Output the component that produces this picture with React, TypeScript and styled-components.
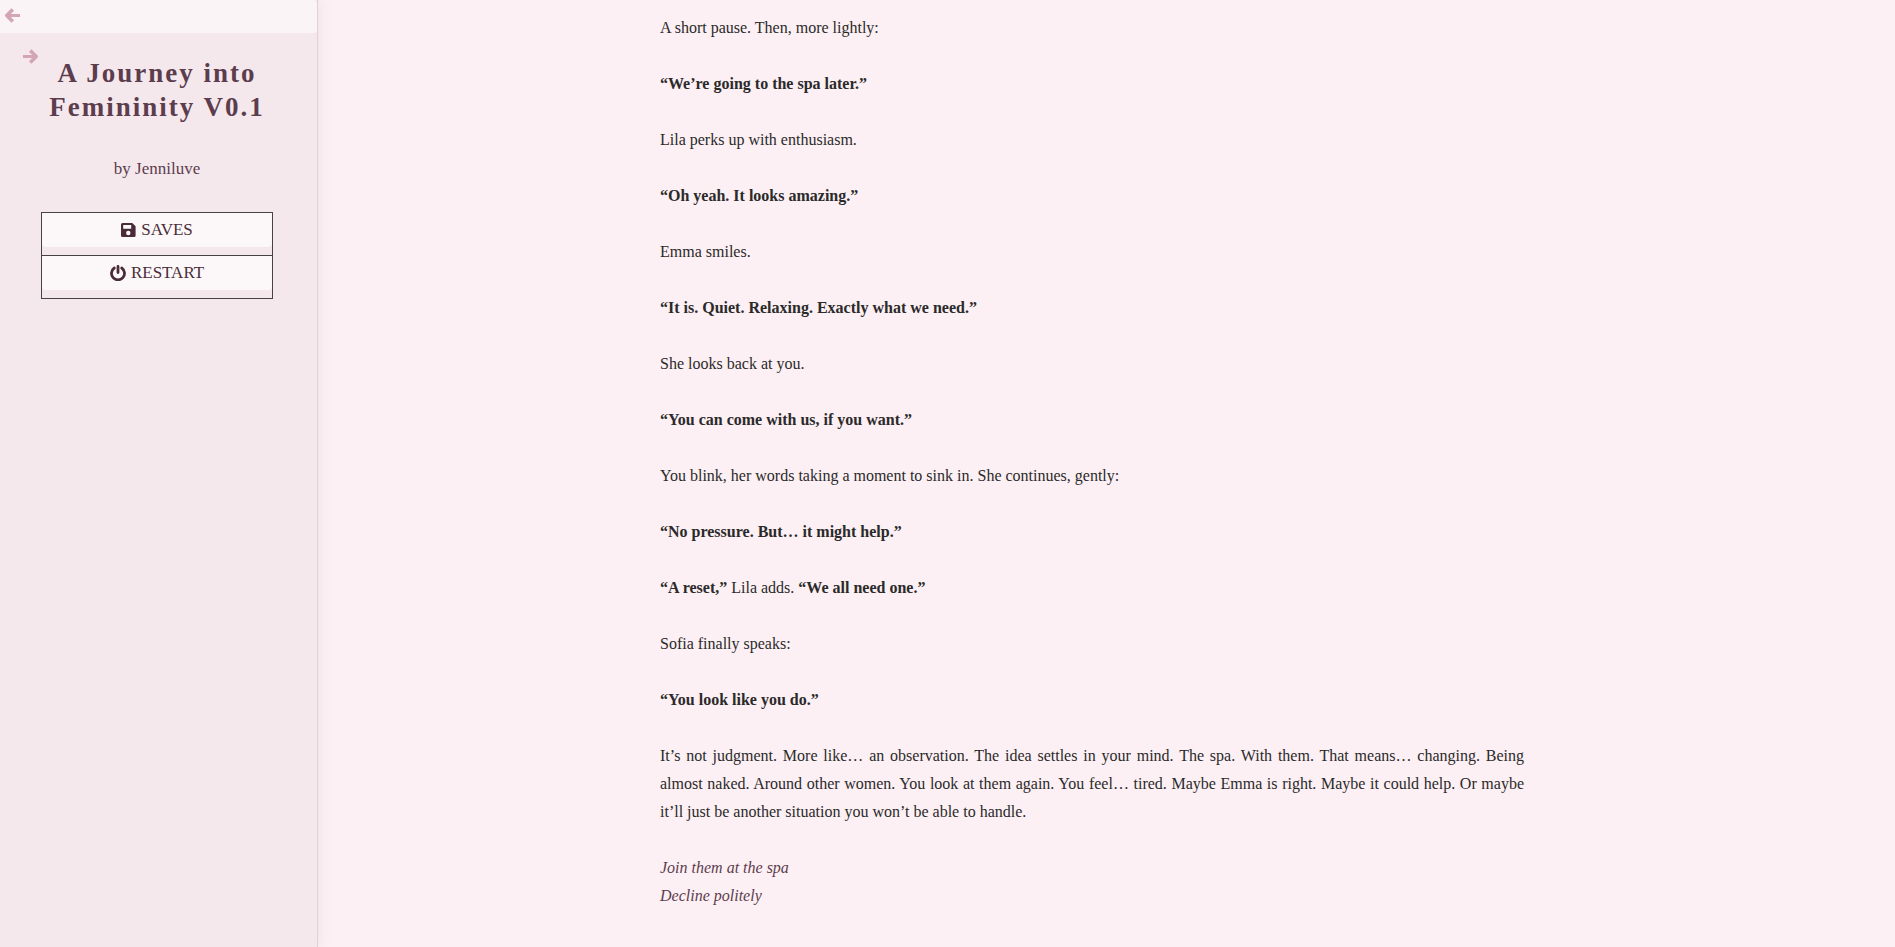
import React from "react";
import styled, { createGlobalStyle } from "styled-components";

const GlobalStyle = createGlobalStyle`
  * { box-sizing: border-box; }
  body {
    margin: 0;
    background: #fdf0f4;
    color: #2a2a2a;
    font: 16px/28px "Liberation Serif", "Times New Roman", serif;
  }
`;

const Page = styled.div`
  display: flex;
  min-height: 100vh;
`;

const Sidebar = styled.aside`
  flex: none;
  width: 318px;
  background: #f5e8ec;
  border-right: 1px solid #e3d0d7;
  box-shadow: 2px 0 12px rgba(92, 61, 78, 0.08);
  color: #5c3d4e;
  text-align: center;
`;

const IconButton = styled.button`
  display: flex;
  align-items: center;
  padding: 0 5px;
  border: 0;
  background: none;
  color: #d4a5b5;
  cursor: pointer;
`;

const ToggleBar = styled(IconButton)`
  width: 100%;
  height: 33px;
  padding-bottom: 2px;
  border-radius: 0 4px 4px 0;
  background: #faf4f6;
`;

const History = styled.nav`
  display: flex;
  padding: 16px 0 0 18px;
`;

const Title = styled.h1`
  margin: -8px 44px 31px 41px;
  font-size: 27px;
  line-height: 34px;
  letter-spacing: 2px;
`;

const Author = styled.p`
  margin: 0 44px 29px 41px;
  font-size: 17px;
`;

const Menu = styled.ul`
  margin: 0 44px 0 41px;
  padding: 0;
  border: 1px solid #444;
  list-style: none;
`;

const MenuItem = styled.li`
  padding-bottom: 8px;

  & + & {
    border-top: 1px solid #444;
  }
`;

const MenuButton = styled.button`
  display: flex;
  align-items: center;
  justify-content: center;
  gap: 5px;
  width: 100%;
  height: 34px;
  padding: 0;
  border: 0;
  border-radius: 0 0 4px 4px;
  background: #fcf8f9;
  color: #4a2c38;
  font: 17px/34px "Liberation Serif", "Times New Roman", serif;
  text-transform: uppercase;
  cursor: pointer;
`;

const Story = styled.main`
  flex: 1;
  min-width: 0;
  padding: 14px 29px 36px 0;
`;

const Passage = styled.article`
  max-width: 864px;
  margin: 0 auto;
  text-align: justify;
`;

const Paragraph = styled.p`
  margin: 0 0 28px;
`;

const Choices = styled.nav`
  display: flex;
  flex-direction: column;
  align-items: flex-start;
`;

const Choice = styled.a`
  color: #5c3d4e;
  font-style: italic;
  text-decoration: none;
`;

const Arrow = ({ forward = false }: { forward?: boolean }) => (
  <svg width="15" height="15" viewBox="0 0 15 15" fill="none" stroke="currentColor" aria-hidden="true">
    <path strokeWidth="3" d={forward ? "M0 7.5H13" : "M15 7.5H2"} />
    <path
      strokeWidth="3.6"
      strokeLinejoin="round"
      d={forward ? "M7.2 1.5L13.2 7.5L7.2 13.5" : "M7.8 1.5L1.8 7.5L7.8 13.5"}
    />
  </svg>
);

const SaveIcon = () => (
  <svg width="15" height="14" viewBox="0 0 15 14" fill="currentColor" fillRule="evenodd" aria-hidden="true">
    <path d="M1.5 0H11.3L14.6 3.2V12.5Q14.6 14 13.1 14H1.5Q0 14 0 12.5V1.5Q0 0 1.5 0ZM2.2 2V5.8H10.2V2ZM7.3 7.8A2.2 2.2 0 1 0 7.3 12.2A2.2 2.2 0 1 0 7.3 7.8Z" />
  </svg>
);

const PowerIcon = () => (
  <svg width="16" height="16" viewBox="0 0 16 16" fill="none" stroke="currentColor" strokeWidth="2.8" strokeLinecap="round" aria-hidden="true">
    <path d="M4.3 3A6.5 6.5 0 1 0 11.7 3M8 1.4V7.6" />
  </svg>
);

export default function App() {
  return (
    <>
      <GlobalStyle />
      <Page>
        <Sidebar>
          <ToggleBar type="button" aria-label="Toggle the sidebar"><Arrow /></ToggleBar>
          <History>
            <IconButton type="button" aria-label="Go forward"><Arrow forward /></IconButton>
          </History>
          <Title>A Journey into Femininity V0.1</Title>
          <Author>by Jenniluve</Author>
          <Menu>
            <MenuItem><MenuButton type="button"><SaveIcon />Saves</MenuButton></MenuItem>
            <MenuItem><MenuButton type="button"><PowerIcon />Restart</MenuButton></MenuItem>
          </Menu>
        </Sidebar>
        <Story>
          <Passage>
            <Paragraph>A short pause. Then, more lightly:</Paragraph>
            <Paragraph><b>“We’re going to the spa later.”</b></Paragraph>
            <Paragraph>Lila perks up with enthusiasm.</Paragraph>
            <Paragraph><b>“Oh yeah. It looks amazing.”</b></Paragraph>
            <Paragraph>Emma smiles.</Paragraph>
            <Paragraph><b>“It is. Quiet. Relaxing. Exactly what we need.”</b></Paragraph>
            <Paragraph>She looks back at you.</Paragraph>
            <Paragraph><b>“You can come with us, if you want.”</b></Paragraph>
            <Paragraph>You blink, her words taking a moment to sink in. She continues, gently:</Paragraph>
            <Paragraph><b>“No pressure. But… it might help.”</b></Paragraph>
            <Paragraph><b>“A reset,”</b> Lila adds. <b>“We all need one.”</b></Paragraph>
            <Paragraph>Sofia finally speaks:</Paragraph>
            <Paragraph><b>“You look like you do.”</b></Paragraph>
            <Paragraph>
              It’s not judgment. More like… an observation. The idea settles in your mind. The spa. With them. That
              means… changing. Being almost naked. Around other women. You look at them again. You feel… tired. Maybe
              Emma is right. Maybe it could help. Or maybe it’ll just be another situation you won’t be able to handle.
            </Paragraph>
            <Choices>
              <Choice href="#join">Join them at the spa</Choice>
              <Choice href="#decline">Decline politely</Choice>
            </Choices>
          </Passage>
        </Story>
      </Page>
    </>
  );
}
